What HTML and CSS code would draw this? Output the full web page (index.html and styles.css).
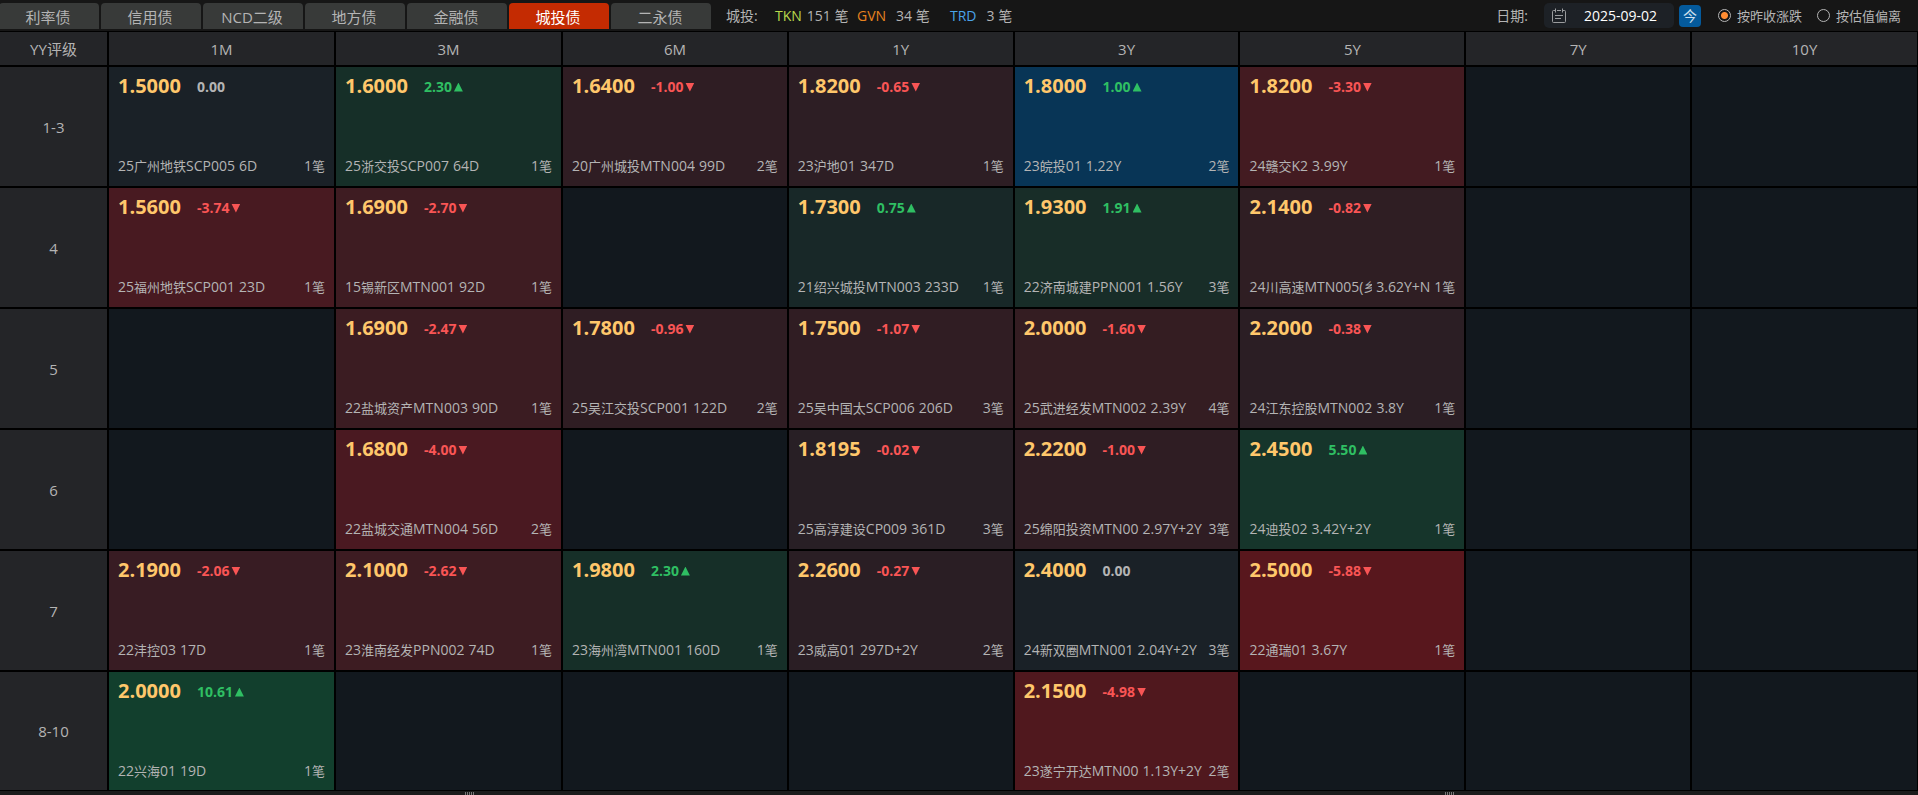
FILE: index.html
```html
<!DOCTYPE html>
<html lang="zh-CN">
<head>
<meta charset="utf-8">
<title>城投债</title>
<link rel="stylesheet" href="styles.css">
</head>
<body>
<header class="topbar">
  <nav class="tabs">
    <button class="tab">利率债</button>
    <button class="tab">信用债</button>
    <button class="tab">NCD二级</button>
    <button class="tab">地方债</button>
    <button class="tab">金融债</button>
    <button class="tab active">城投债</button>
    <button class="tab">二永债</button>
  </nav>
  <div class="stats">
    <span class="stats-name">城投:</span>
    <span class="stat"><b class="tkn">TKN</b><span class="count">151 笔</span></span>
    <span class="stat"><b class="gvn">GVN</b><span class="count wide">34 笔</span></span>
    <span class="stat last"><b class="trd">TRD</b><span class="count wide">3 笔</span></span>
  </div>
  <div class="filters">
    <label class="date-label" for="date">日期:</label>
    <div class="date-box">
      <svg class="calendar" viewBox="0 0 16 16" width="16" height="16" fill="none" stroke="#9a9c9e"><path d="M4 2.5H2.5a1 1 0 0 0-1 1v10a1 1 0 0 0 1 1h11a1 1 0 0 0 1-1v-10a1 1 0 0 0-1-1H12M4.500 0.500v4M11.500 0.500v4M6 2.500h4M4 7.500h8M4 10.500h6"/></svg>
      <input id="date" class="date" type="text" value="2025-09-02">
    </div>
    <button class="today">今</button>
    <label class="radio"><input type="radio" name="mode" checked>按昨收涨跌</label>
    <label class="radio"><input type="radio" name="mode">按估值偏离</label>
  </div>
</header>
<main>
<table class="grid">
<thead>
<tr><th class="rating">YY评级</th><th class="short">1M</th><th class="short">3M</th><th>6M</th><th>1Y</th><th>3Y</th><th>5Y</th><th>7Y</th><th>10Y</th></tr>
</thead>
<tbody>
<tr>
<th>1-3</th>
<td style="--heat:#1a2127"><div class="cell"><p class="quote"><b>1.5000</b><i>0.00</i></p><p class="bond"><span class="name">25<span class="zh">广州地铁</span>SCP005</span><span class="term">6D</span><span class="deals">1<span class="zh">笔</span></span></p></div></td>
<td style="--heat:#162f28"><div class="cell"><p class="quote"><b>1.6000</b><i class="up">2.30</i></p><p class="bond"><span class="name">25<span class="zh">浙交投</span>SCP007</span><span class="term">64D</span><span class="deals">1<span class="zh">笔</span></span></p></div></td>
<td style="--heat:#2f1d23"><div class="cell"><p class="quote"><b>1.6400</b><i class="down">-1.00</i></p><p class="bond"><span class="name">20<span class="zh">广州城投</span>MTN004</span><span class="term">99D</span><span class="deals">2<span class="zh">笔</span></span></p></div></td>
<td style="--heat:#2d1e24"><div class="cell"><p class="quote"><b>1.8200</b><i class="down">-0.65</i></p><p class="bond"><span class="name">23<span class="zh">沪地</span>01</span><span class="term">347D</span><span class="deals">1<span class="zh">笔</span></span></p></div></td>
<td style="--heat:#083556"><div class="cell"><p class="quote"><b>1.8000</b><i class="up">1.00</i></p><p class="bond"><span class="name">23<span class="zh">皖投</span>01</span><span class="term">1.22Y</span><span class="deals">2<span class="zh">笔</span></span></p></div></td>
<td style="--heat:#431b21"><div class="cell"><p class="quote"><b>1.8200</b><i class="down">-3.30</i></p><p class="bond"><span class="name">24<span class="zh">赣交</span>K2</span><span class="term">3.99Y</span><span class="deals">1<span class="zh">笔</span></span></p></div></td>
<td></td><td></td>
</tr>
<tr>
<th>4</th>
<td style="--heat:#481a21"><div class="cell"><p class="quote"><b>1.5600</b><i class="down">-3.74</i></p><p class="bond"><span class="name">25<span class="zh">福州地铁</span>SCP001</span><span class="term">23D</span><span class="deals">1<span class="zh">笔</span></span></p></div></td>
<td style="--heat:#3e1c22"><div class="cell"><p class="quote"><b>1.6900</b><i class="down">-2.70</i></p><p class="bond"><span class="name">15<span class="zh">锡新区</span>MTN001</span><span class="term">92D</span><span class="deals">1<span class="zh">笔</span></span></p></div></td>
<td></td>
<td style="--heat:#182828"><div class="cell"><p class="quote"><b>1.7300</b><i class="up">0.75</i></p><p class="bond"><span class="name">21<span class="zh">绍兴城投</span>MTN003</span><span class="term">233D</span><span class="deals">1<span class="zh">笔</span></span></p></div></td>
<td style="--heat:#182d28"><div class="cell"><p class="quote"><b>1.9300</b><i class="up">1.91</i></p><p class="bond"><span class="name">22<span class="zh">济南城建</span>PPN001</span><span class="term">1.56Y</span><span class="deals">3<span class="zh">笔</span></span></p></div></td>
<td style="--heat:#2f1e23"><div class="cell"><p class="quote"><b>2.1400</b><i class="down">-0.82</i></p><p class="bond"><span class="name">24<span class="zh">川高速</span>MTN005(<span class="zh">乡</span></span><span class="term">3.62Y+N</span><span class="deals">1<span class="zh">笔</span></span></p></div></td>
<td></td><td></td>
</tr>
<tr>
<th>5</th>
<td></td>
<td style="--heat:#3b1c22"><div class="cell"><p class="quote"><b>1.6900</b><i class="down">-2.47</i></p><p class="bond"><span class="name">22<span class="zh">盐城资产</span>MTN003</span><span class="term">90D</span><span class="deals">1<span class="zh">笔</span></span></p></div></td>
<td style="--heat:#2f1d23"><div class="cell"><p class="quote"><b>1.7800</b><i class="down">-0.96</i></p><p class="bond"><span class="name">25<span class="zh">吴江交投</span>SCP001</span><span class="term">122D</span><span class="deals">2<span class="zh">笔</span></span></p></div></td>
<td style="--heat:#301d23"><div class="cell"><p class="quote"><b>1.7500</b><i class="down">-1.07</i></p><p class="bond"><span class="name">25<span class="zh">吴中国太</span>SCP006</span><span class="term">206D</span><span class="deals">3<span class="zh">笔</span></span></p></div></td>
<td style="--heat:#341d22"><div class="cell"><p class="quote"><b>2.0000</b><i class="down">-1.60</i></p><p class="bond"><span class="name">25<span class="zh">武进经发</span>MTN002</span><span class="term">2.39Y</span><span class="deals">4<span class="zh">笔</span></span></p></div></td>
<td style="--heat:#2b1e24"><div class="cell"><p class="quote"><b>2.2000</b><i class="down">-0.38</i></p><p class="bond"><span class="name">24<span class="zh">江东控股</span>MTN002</span><span class="term">3.8Y</span><span class="deals">1<span class="zh">笔</span></span></p></div></td>
<td></td><td></td>
</tr>
<tr>
<th>6</th>
<td></td>
<td style="--heat:#4a1921"><div class="cell"><p class="quote"><b>1.6800</b><i class="down">-4.00</i></p><p class="bond"><span class="name">22<span class="zh">盐城交通</span>MTN004</span><span class="term">56D</span><span class="deals">2<span class="zh">笔</span></span></p></div></td>
<td></td>
<td style="--heat:#281f25"><div class="cell"><p class="quote"><b>1.8195</b><i class="down">-0.02</i></p><p class="bond"><span class="name">25<span class="zh">高淳建设</span>CP009</span><span class="term">361D</span><span class="deals">3<span class="zh">笔</span></span></p></div></td>
<td style="--heat:#2f1d23"><div class="cell"><p class="quote"><b>2.2200</b><i class="down">-1.00</i></p><p class="bond"><span class="name">25<span class="zh">绵阳投资</span>MTN00</span><span class="term">2.97Y+2Y</span><span class="deals">3<span class="zh">笔</span></span></p></div></td>
<td style="--heat:#16352b"><div class="cell"><p class="quote"><b>2.4500</b><i class="up">5.50</i></p><p class="bond"><span class="name">24<span class="zh">迪投</span>02</span><span class="term">3.42Y+2Y</span><span class="deals">1<span class="zh">笔</span></span></p></div></td>
<td></td><td></td>
</tr>
<tr>
<th>7</th>
<td style="--heat:#381c23"><div class="cell"><p class="quote"><b>2.1900</b><i class="down">-2.06</i></p><p class="bond"><span class="name">22<span class="zh">沣控</span>03</span><span class="term">17D</span><span class="deals">1<span class="zh">笔</span></span></p></div></td>
<td style="--heat:#3d1c22"><div class="cell"><p class="quote"><b>2.1000</b><i class="down">-2.62</i></p><p class="bond"><span class="name">23<span class="zh">淮南经发</span>PPN002</span><span class="term">74D</span><span class="deals">1<span class="zh">笔</span></span></p></div></td>
<td style="--heat:#162f28"><div class="cell"><p class="quote"><b>1.9800</b><i class="up">2.30</i></p><p class="bond"><span class="name">23<span class="zh">海州湾</span>MTN001</span><span class="term">160D</span><span class="deals">1<span class="zh">笔</span></span></p></div></td>
<td style="--heat:#2a1e24"><div class="cell"><p class="quote"><b>2.2600</b><i class="down">-0.27</i></p><p class="bond"><span class="name">23<span class="zh">威高</span>01</span><span class="term">297D+2Y</span><span class="deals">2<span class="zh">笔</span></span></p></div></td>
<td style="--heat:#1a2127"><div class="cell"><p class="quote"><b>2.4000</b><i>0.00</i></p><p class="bond"><span class="name">24<span class="zh">新双圈</span>MTN001</span><span class="term">2.04Y+2Y</span><span class="deals">3<span class="zh">笔</span></span></p></div></td>
<td style="--heat:#58171d"><div class="cell"><p class="quote"><b>2.5000</b><i class="down">-5.88</i></p><p class="bond"><span class="name">22<span class="zh">通瑞</span>01</span><span class="term">3.67Y</span><span class="deals">1<span class="zh">笔</span></span></p></div></td>
<td></td><td></td>
</tr>
<tr>
<th>8-10</th>
<td style="--heat:#123f2d"><div class="cell"><p class="quote"><b>2.0000</b><i class="up">10.61</i></p><p class="bond"><span class="name">22<span class="zh">兴海</span>01</span><span class="term">19D</span><span class="deals">1<span class="zh">笔</span></span></p></div></td>
<td></td><td></td><td></td>
<td style="--heat:#50181e"><div class="cell"><p class="quote"><b>2.1500</b><i class="down">-4.98</i></p><p class="bond"><span class="name">23<span class="zh">遂宁开达</span>MTN00</span><span class="term">1.13Y+2Y</span><span class="deals">2<span class="zh">笔</span></span></p></div></td>
<td></td><td></td><td></td>
</tr>
</tbody>
</table>
</main>
<footer class="splitters"><div class="splitter"></div><div class="splitter"></div></footer>
</body>
</html>
```
FILE: styles.css
```css
* { box-sizing: border-box; }
body {
  margin: 0;
  height: 100vh;
  display: flex;
  flex-direction: column;
  overflow: hidden;
  background: #1a1a1a;
  color: #b4b4b4;
  font: 14px/20px "Open Sans", "Noto Sans CJK SC", sans-serif;
}
button, input { font: inherit; color: inherit; margin: 0; }
p { margin: 0; }

.topbar {
  display: flex;
  align-items: center;
  height: 32px;
  flex: none;
  background: #161616;
  border-bottom: 1px solid #000;
}
.tabs { display: flex; gap: 2px; align-self: flex-start; padding-top: 3px; margin-left: -1px; }
.tab {
  width: 100px;
  height: 26px;
  padding: 2px 2px 0 0;
  border: 0;
  border-radius: 4px 4px 0 0;
  background: #383a39;
  font-size: 15px;
  line-height: 24px;
}
.tab.active { background: #c42b02; color: #fff; }

.stats { display: flex; margin-left: 15px; }
.stats b { font-weight: 400; }
.stats-name { width: 49px; }
.stat { display: flex; width: 82px; }
.stat + .stat { width: 93px; }
.count { margin-left: 5px; }
.count.wide { margin-left: 10px; }
.tkn { color: #b9d94c; }
.gvn { color: #e8831f; }
.trd { color: #4aa3e8; }

.filters { display: flex; align-items: center; margin-left: auto; padding-right: 17px; }
.date-label { margin-right: 16px; }
.date-box {
  display: flex;
  align-items: center;
  width: 130px;
  height: 25px;
  padding-left: 7px;
  border-radius: 5px;
  background: #1d2126;
}
.calendar { flex: none; }
.date {
  width: 100%;
  min-width: 0;
  padding: 0;
  border: 0;
  outline: 0;
  background: none;
  color: #fff;
  text-align: center;
}
.today {
  width: 22px;
  height: 22px;
  margin: 0 17px 0 5px;
  padding: 0;
  border: 0;
  border-radius: 4px;
  background: #045a9c;
  color: #cfe0ee;
  line-height: 22px;
}
.radio { display: flex; align-items: center; gap: 6px; font-size: 13px; }
.radio + .radio { margin-left: 15px; }
.radio input {
  appearance: none;
  width: 13px;
  height: 13px;
  border: 1px solid #b4b4b4;
  border-radius: 50%;
}
.radio input:checked { background: radial-gradient(circle, #ff8c32 0 3px, transparent 4px); }

main { flex: none; background: #000; }
.grid { width: 100%; table-layout: fixed; border-collapse: separate; border-spacing: 0; }
.grid th, .grid td { padding: 0; border: solid #000; border-width: 0 2px 2px 0; }
.grid tr > :last-child { border-right-width: 1px; }
.grid tbody tr:last-child td, .grid tbody tr:last-child th { border-bottom-width: 1px; }
.grid th { background: #242528; font-size: 15px; font-weight: 400; }
.grid thead th { height: 35px; }
.grid .rating { width: 109px; }
.grid .short { width: 227px; }
.grid tbody tr { height: 121px; }
.grid tbody tr:last-child { height: 119px; }
.grid td { background: var(--heat, #12181e); vertical-align: top; }

.cell {
  height: 118px;
  display: flex;
  flex-direction: column;
  justify-content: space-between;
  padding: 4px 9px 9px;
}
.quote { display: flex; align-items: center; gap: 16px; line-height: 28px; }
.quote b { font-size: 20px; font-weight: 700; color: #ffc76b; }
.quote i { display: flex; align-items: center; gap: 2px; padding-top: 2px; font-style: normal; font-weight: 700; }
.quote .up { color: #2fbf63; }
.quote .down { color: #f95555; }
.quote .up::after, .quote .down::after { content: ""; width: 9px; height: 9px; background: currentColor; }
.quote .up::after { clip-path: polygon(50% 0, 100% 100%, 0 100%); }
.quote .down::after { clip-path: polygon(0 0, 100% 0, 50% 100%); }
.bond { display: flex; white-space: nowrap; }
.zh { font-size: 13px; }
.name { min-width: 0; overflow: hidden; }
.term { flex: none; margin: 0 4px; }
.deals { flex: none; margin-left: auto; }

.splitters { flex: 1; display: flex; gap: 42px; overflow: hidden; background: #1b1b1b; }
.splitter { flex: 1; display: flex; justify-content: center; padding-top: 1px; }
.splitter::before { content: ""; width: 9px; background: repeating-linear-gradient(90deg, #777 0 1px, #1b1b1b 1px 2px); }
```
